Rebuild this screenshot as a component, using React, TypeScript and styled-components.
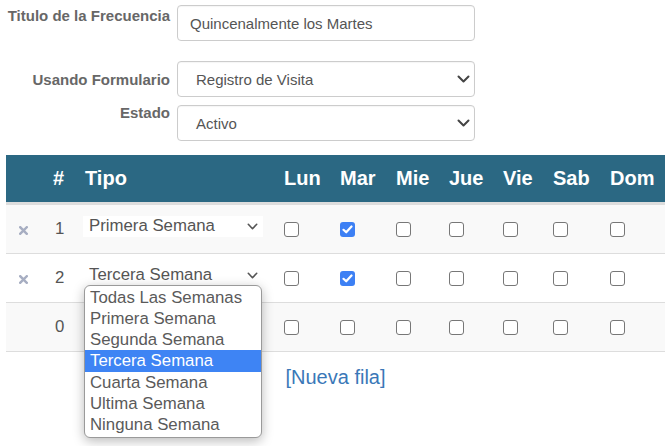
import React from "react";
import styled, { createGlobalStyle } from "styled-components";

const GlobalStyle = createGlobalStyle`
  html, body { margin: 0; padding: 0; background: #fff; }
  body { font-family: "Liberation Sans", Arial, sans-serif; color: #555; }
`;

const Page = styled.div`
  width: 671px;
  height: 446px;
  overflow: hidden;
  padding-top: 5px;
  box-sizing: border-box;
`;

const Form = styled.div`
  display: flex;
  flex-direction: column;
`;

const FormRow = styled.div<{ $gap: number }>`
  display: grid;
  grid-template-columns: 170px 298px;
  column-gap: 7px;
  align-items: start;
  margin-top: ${(p) => p.$gap}px;
`;

const Label = styled.label<{ $offset: number }>`
  text-align: right;
  font-weight: bold;
  font-size: 15px;
  line-height: 17px;
  color: #676767;
  margin-top: ${(p) => p.$offset}px;
`;

const TextBox = styled.div`
  height: 36px;
  box-sizing: border-box;
  border: 1px solid #ccc;
  border-radius: 4px;
  background: #fff;
  box-shadow: inset 0 1px 1px rgba(0, 0, 0, 0.04);
  display: flex;
  align-items: center;
  padding: 0 12px;
  font-size: 15px;
  color: #555;
`;

const SelectBox = styled(TextBox)`
  justify-content: space-between;
  padding: 0 4px 0 18px;
`;

const Table = styled.table`
  margin-top: 14px;
  margin-left: 6px;
  width: 659px;
  border-collapse: collapse;
  table-layout: fixed;
`;

const HeadRow = styled.tr`
  background: #2b6883;
  border-bottom: 3px solid #ddd;
`;

const HeadCell = styled.th`
  height: 47px;
  color: #fff;
  font-weight: bold;
  font-size: 20px;
  text-align: left;
  padding: 0 0 0 8px;
  vertical-align: middle;
  white-space: nowrap;
`;

const BodyRow = styled.tr<{ $striped: boolean }>`
  background: ${(p) => (p.$striped ? "#f9f9f9" : "#fff")};
  border-bottom: 1px solid #ddd;
`;

const Cell = styled.td<{ $pad?: number }>`
  height: 48px;
  padding: 0 0 0 ${(p) => (p.$pad ?? 8)}px;
  vertical-align: middle;
  font-size: 16.8px;
  color: #555;
`;

const FooterRow = styled.tr``;

const FooterCell = styled.td`
  height: 50px;
  padding: 0;
  text-align: center;
  vertical-align: middle;
`;

const NewRowLink = styled.a`
  color: #3a78b8;
  font-size: 20px;
  text-decoration: none;
`;

const RemoveIcon = styled.svg`
  display: block;
  width: 9px;
  height: 9px;
  margin-top: 3px;
`;

const TipoSelect = styled.div<{ $filled: boolean }>`
  position: relative;
  width: 180px;
  height: 21px;
  margin-bottom: 6px;
  margin-left: -1px;
  background: ${(p) => (p.$filled ? "#fff" : "transparent")};
  display: flex;
  align-items: center;
  justify-content: space-between;
  padding: 0 5px 0 6px;
  box-sizing: border-box;
  font-size: 16.8px;
  color: #555;
  white-space: nowrap;
`;

const Dropdown = styled.div`
  position: absolute;
  top: 100%;
  left: 1px;
  width: 178px;
  box-sizing: border-box;
  margin-top: -1px;
  border: 1px solid #9a9a9a;
  border-radius: 6px;
  background: #fff;
  box-shadow: 0 3px 12px rgba(0, 0, 0, 0.28);
  padding: 1px 0;
  z-index: 5;
  overflow: hidden;
`;

const Option = styled.div<{ $active: boolean }>`
  height: 21.33px;
  line-height: 21.33px;
  padding-left: 5px;
  font-size: 16.8px;
  color: ${(p) => (p.$active ? "#fff" : "#5a5a5a")};
  background: ${(p) => (p.$active ? "#3e84f4" : "transparent")};
  white-space: nowrap;
`;

const Box = styled.span<{ $checked: boolean }>`
  width: 15px;
  height: 15px;
  box-sizing: border-box;
  border-radius: 3px;
  border: ${(p) => (p.$checked ? "none" : "1.5px solid #777")};
  background: ${(p) => (p.$checked ? "#3d80f4" : "#fff")};
  display: flex;
  align-items: center;
  justify-content: center;
`;

const Chevron = ({ w, h, color, sw }: { w: number; h: number; color: string; sw: number }) => (
  <svg width={w} height={h} viewBox={`0 0 ${w} ${h}`} style={{ flex: "none" }}>
    <polyline
      points={`${sw / 2 + 0.5},${sw / 2 + 0.5} ${w / 2},${h - sw / 2 - 0.5} ${w - sw / 2 - 0.5},${sw / 2 + 0.5}`}
      fill="none"
      stroke={color}
      strokeWidth={sw}
      strokeLinecap="round"
      strokeLinejoin="round"
    />
  </svg>
);

const Checkbox = ({ checked }: { checked: boolean }) => (
  <Box $checked={checked}>
    {checked && (
      <svg width="11" height="9" viewBox="0 0 11 9">
        <polyline points="1.5,4.8 4.2,7.3 9.5,1.5" fill="none" stroke="#fff" strokeWidth="2.2" strokeLinecap="round" strokeLinejoin="round" />
      </svg>
    )}
  </Box>
);

const Remove = () => (
  <RemoveIcon viewBox="0 0 9 9">
    <path d="M1.2 1.2 L7.8 7.8 M7.8 1.2 L1.2 7.8" stroke="#a7aec2" strokeWidth="2.4" strokeLinecap="square" />
  </RemoveIcon>
);

const days = ["Lun", "Mar", "Mie", "Jue", "Vie", "Sab", "Dom"];
const colWidths = [39, 32, 199, 56, 56, 53, 54, 50, 57, 63];
const options = [
  "Todas Las Semanas",
  "Primera Semana",
  "Segunda Semana",
  "Tercera Semana",
  "Cuarta Semana",
  "Ultima Semana",
  "Ninguna Semana",
];

type Row = { id: number; removable: boolean; tipo: string; checks: boolean[]; open?: boolean; filled: boolean };

const rows: Row[] = [
  { id: 1, removable: true, tipo: "Primera Semana", checks: [false, true, false, false, false, false, false], filled: true },
  { id: 2, removable: true, tipo: "Tercera Semana", checks: [false, true, false, false, false, false, false], open: true, filled: false },
  { id: 0, removable: false, tipo: "", checks: [false, false, false, false, false, false, false], filled: false },
];

export default function App() {
  return (
    <>
      <GlobalStyle />
      <Page>
        <Form>
          <FormRow $gap={0}>
            <Label $offset={2}>Titulo de la Frecuencia</Label>
            <TextBox>Quincenalmente los Martes</TextBox>
          </FormRow>
          <FormRow $gap={20}>
            <Label $offset={10}>Usando Formulario</Label>
            <SelectBox>
              <span>Registro de Visita</span>
              <Chevron w={13} h={8} color="#444" sw={2} />
            </SelectBox>
          </FormRow>
          <FormRow $gap={8}>
            <Label $offset={-1}>Estado</Label>
            <SelectBox>
              <span>Activo</span>
              <Chevron w={13} h={8} color="#444" sw={2} />
            </SelectBox>
          </FormRow>
        </Form>

        <Table>
          <colgroup>
            {colWidths.map((w, i) => (
              <col key={i} style={{ width: w }} />
            ))}
          </colgroup>
          <thead>
            <HeadRow>
              <HeadCell />
              <HeadCell>#</HeadCell>
              <HeadCell>Tipo</HeadCell>
              {days.map((d) => (
                <HeadCell key={d}>{d}</HeadCell>
              ))}
            </HeadRow>
          </thead>
          <tbody>
            {rows.map((r, i) => (
              <BodyRow key={i} $striped={i % 2 === 0}>
                <Cell $pad={13}>{r.removable && <Remove />}</Cell>
                <Cell $pad={10}>{r.id}</Cell>
                <Cell $pad={7}>
                  <TipoSelect $filled={r.filled}>
                    <span>{r.tipo}</span>
                    {r.tipo && <Chevron w={11} h={7} color="#555" sw={1.6} />}
                    {r.open && (
                      <Dropdown>
                        {options.map((o) => (
                          <Option key={o} $active={o === r.tipo}>
                            {o}
                          </Option>
                        ))}
                      </Dropdown>
                    )}
                  </TipoSelect>
                </Cell>
                {r.checks.map((c, j) => (
                  <Cell key={j}>
                    <Checkbox checked={c} />
                  </Cell>
                ))}
              </BodyRow>
            ))}
            <FooterRow>
              <FooterCell colSpan={10}>
                <NewRowLink href="#">[Nueva fila]</NewRowLink>
              </FooterCell>
            </FooterRow>
          </tbody>
        </Table>
      </Page>
    </>
  );
}
